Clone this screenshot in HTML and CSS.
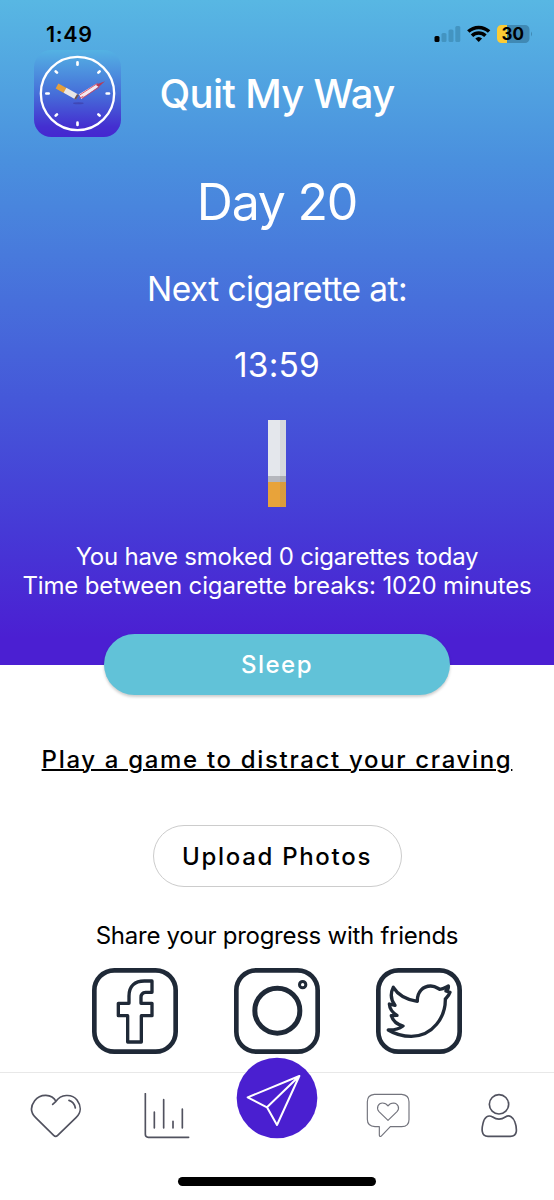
FILE: index.html
```
<!DOCTYPE html>
<html lang="en">
<head>
<meta charset="utf-8">
<title>Quit My Way</title>
<link rel="stylesheet" href="styles.css">
</head>
<body>
<div class="hero">
    <div class="status">
        <span class="time">1:49</span>
        <svg class="indicators" width="100" height="20" viewBox="0 0 100 20">
            <!-- signal -->
            <rect x="0.5" y="12" width="5" height="6" rx="1.5" fill="#000"/>
            <g fill="#4394c1">
                <rect x="7.5" y="9" width="5" height="9" rx="1.5"/>
                <rect x="14.5" y="5.5" width="5" height="12.5" rx="1.5"/>
                <rect x="21.3" y="2" width="5" height="16" rx="1.5"/>
            </g>
            <!-- wifi -->
            <g fill="none" stroke="#000" stroke-width="3.5">
                <path d="M34.3 7.6a15 15 0 0 1 20.8 0"/>
                <path d="M38 11.7a9.6 9.6 0 0 1 13.4 0"/>
            </g>
            <path d="M44.7 18l-3.4-3.5a5 5 0 0 1 6.8 0z" fill="#000"/>
            <!-- battery -->
            <path d="M67.5 1H73v18h-5.500a4.500 4.500 0 0 1-4.500-4.500v-9A4.500 4.500 0 0 1 67.500 1z" fill="#fccc35"/>
            <path d="M73 1h18a4.500 4.500 0 0 1 4.500 4.500v9A4.500 4.500 0 0 1 91 19H73z" fill="#4089b4"/>
            <path d="M97 7.500q2 2.500 0 5z" fill="#4089b4"/>
            <text x="78.700" y="16" class="battery">30</text>
        </svg>
    </div>
    <div class="header">
        <svg class="logo" viewBox="28 28 261 261">
            <defs>
                <linearGradient id="logoBg" x1="0" y1="0" x2="0" y2="1">
                    <stop offset="0" stop-color="#54b2e3"/>
                    <stop offset="0.5" stop-color="#466fd9"/>
                    <stop offset="0.88" stop-color="#442fd0"/>
                    <stop offset="1" stop-color="#4527d0"/>
                </linearGradient>
            </defs>
            <rect x="28" y="28" width="261" height="261" rx="52" fill="url(#logoBg)"/>
            <circle cx="158.500" cy="158.500" r="110" fill="none" stroke="#fff" stroke-width="7"/>
            <path d="M158.500 65v7M158.500 246v7M65 158.500h7M246 158.500h7M93 92l4 4M225 92l-4 4M93 225l4-4M225 225l-4-4" stroke="#fff" stroke-width="8" stroke-linecap="round" fill="none"/>
            <ellipse cx="161" cy="188" rx="16" ry="3" fill="#3c3aa0" opacity="0.6"/>
            <g stroke-width="17" fill="none">
                <path d="M97 136l26 14" stroke="#e5a03c"/>
                <path d="M121 149l36 20" stroke="#e9e6e6"/>
                <path d="M153 167l5 3" stroke="#6d5455"/>
            </g>
            <path d="M163 161l52-32 9 7-54 39z" fill="#f4e9f0"/>
            <path d="M165 163l54-35M172 173l52-34M164 173l12-6" stroke="#d94055" stroke-width="2.500" fill="none"/>
            <path d="M213 132l28-10-19 17z" fill="#b53b58"/>
        </svg>
        <h1>Quit My Way</h1>
    </div>
    <div class="day">Day 20</div>
    <div class="next">Next cigarette at:</div>
    <div class="next clock">13:59</div>
    <div class="cigarette"></div>
    <div class="stats">
        <div class="smoked">You have smoked 0 cigarettes today</div>
        <div class="between">Time between cigarette breaks: 1020 minutes</div>
    </div>
</div>

<button class="sleep">Sleep</button>
<a class="game" href="#">Play a game to distract your craving</a>
<button class="upload">Upload Photos</button>
<div class="share">Share your progress with friends</div>

<div class="social">
    <svg viewBox="36 24 258 258">
        <rect x="43" y="31" width="244" height="244" rx="60" stroke-width="14"/>
        <path d="M216 63V97H197Q183 98 183 112V130H216V167H184V246H143V167H115V130H147V108C147 78 165 63 193 63Z" stroke-width="10"/>
    </svg>
    <svg viewBox="27 24 258 258">
        <rect x="34" y="31" width="244" height="244" rx="60" stroke-width="14"/>
        <circle cx="157" cy="152" r="67.500" stroke-width="15"/>
        <circle cx="233" cy="74" r="9.500" stroke-width="9"/>
    </svg>
    <svg viewBox="34 24 258 258">
        <rect x="41" y="31" width="244" height="244" rx="60" stroke-width="14"/>
        <path d="M86 82C100 105 125 119 158 124C157 95 175 78 198 78C212 78 218 84 225 88C235 87 243 82 251 78C252 85 250 89 244 93L256 97C253 107 247 112 242 117C243 170 205 229 140 229C115 229 90 222 71 210C90 211 101 208 115 198C96 193 85 183 80 167L97 166C82 157 75 147 74 132L91 136C77 118 77 100 86 82Z" stroke-width="10"/>
    </svg>
</div>

<div class="nav">
    <a href="#"><svg width="52" height="46" viewBox="91 97 156 138">
        <path d="M159 131L169 122C157 99 122 98 105 120C90 140 94 157 108 171L162 224Q168 230 174 224L229 171C244 157 246 137 232 118C216 98 183 101 169 122M208 119Q224 124 227 142"/>
    </svg></a>
    <a href="#"><svg width="46" height="46" viewBox="432 97 138 138">
        <path d="M436 99V221Q436 230 445 230H566M463 154V202M491 117V202M519 182V202M547 145V202"/>
    </svg></a>
    <a class="send" href="#"><svg width="82" height="82" viewBox="35 290 246 246">
        <circle cx="158" cy="413" r="121"/>
        <path d="M225 347L70 411L128 441L158 494ZM225 347L128 441"/>
    </svg></a>
    <a href="#"><svg class="thin" width="44" height="46" viewBox="109 97 132 138">
        <path d="M134 101H216Q238 103 238 123V177Q238 197 216 198H182L154 227Q149 229 149 223V198H136Q113 197 113 176V123Q113 103 134 101ZM175 179L148 153C138 141 147 127 158 127Q169 127 175 136Q181 127 192 127C204 128 212 142 202 153Z"/>
    </svg></a>
    <a href="#"><svg width="38" height="46" viewBox="450 97 114 138">
        <circle cx="507" cy="131" r="29"/>
        <path d="M488 169C474 161 463 170 459 188Q455 204 457 213Q459 227 474 227H541Q557 227 559 212Q560 199 555 185C550 169 538 161 526 169Q507 182 488 169Z"/>
    </svg></a>
</div>
<div class="home"></div>
</body>
</html>
```
FILE: styles.css
```
* { box-sizing: border-box; }
body { margin: 0; width: 554px; height: 1200px; overflow: hidden; display: flex; flex-direction: column; align-items: center; background: #fff; color: #000; font-family: Inter, "Liberation Sans", sans-serif; }
button { font-family: inherit; padding: 0; }
svg { display: block; }

.hero { width: 554px; height: 665px; flex: none; color: #fff; text-align: center; white-space: nowrap; background: linear-gradient(#58b7e3 0%, #4a90de 24%, #4558d9 60%, #4639d6 80%, #4b1fd2 96%); }

.status { height: 49px; padding: 19px 20px 0 46px; display: flex; justify-content: space-between; align-items: center; color: #000; }
.time { font-size: 21.5px; font-weight: 600; letter-spacing: 0.7px; }
.battery { font-size: 17px; font-weight: 700; text-anchor: middle; }

.header { height: 88px; padding: 0 34px; display: grid; grid-template-columns: 87px 1fr 87px; align-items: center; }
.logo { width: 87px; height: 87px; }
.header h1 { margin: 0; font-size: 40px; font-weight: 500; letter-spacing: -0.7px; }

.day { margin-top: 35px; font-size: 50px; line-height: 60px; letter-spacing: -1.2px; }
.next { margin-top: 37px; font-size: 33.5px; line-height: 40px; letter-spacing: -0.6px; }
.clock { margin-top: 36px; letter-spacing: 0.2px; }

.cigarette { width: 18px; height: 87px; margin: 35px auto 0; background: linear-gradient(90deg, transparent 65%, rgba(90, 90, 90, 0.1) 65%), linear-gradient(#e4e7ec 56px, #b5b7bd 56px, #b5b7bd 62px, #e8a33a 62px); }

.stats { margin-top: 35px; font-size: 24px; line-height: 29px; }
.smoked { letter-spacing: -0.24px; }
.between { letter-spacing: -0.15px; }

.sleep { width: 346px; height: 61px; flex: none; margin-top: -31px; border: 0; border-radius: 31px; background: #61c2d8; color: #fff; font-size: 24px; font-weight: 500; letter-spacing: 1.5px; box-shadow: 0 2px 3px rgba(0, 0, 0, 0.2); }
.game { margin-top: 50px; color: #000; font-size: 24px; font-weight: 500; line-height: 30px; letter-spacing: 1.67px; white-space: nowrap; text-decoration-thickness: 2px; }
.upload { width: 249px; height: 62px; flex: none; margin-top: 50px; border: 1px solid #ccc; border-radius: 31px; background: #fff; color: #000; font-size: 24px; font-weight: 500; letter-spacing: 1.7px; }
.share { margin-top: 34px; font-size: 24px; line-height: 30px; letter-spacing: -0.26px; white-space: nowrap; }

.social { margin-top: 17px; display: flex; gap: 56px; }
.social svg { width: 86px; height: 86px; fill: none; stroke: #1f2937; stroke-linejoin: round; }

.nav { width: 554px; height: 105px; flex: none; margin-top: 18px; padding: 20px 0 0 1px; border-top: 1px solid #e8e8e8; display: grid; grid-template-columns: repeat(5, 1fr); justify-items: center; align-items: start; }
.nav svg { fill: none; stroke: #51525f; stroke-width: 5; stroke-linecap: round; stroke-linejoin: round; }
.nav .thin { stroke-width: 3.5; stroke: #73747d; }
.nav .send { margin-top: -36px; }
.nav .send circle { fill: #4a1fd0; stroke: none; }
.nav .send path { stroke: #fff; stroke-width: 6; }

.home { width: 198px; height: 9px; flex: none; border-radius: 5px; background: #000; }
```
